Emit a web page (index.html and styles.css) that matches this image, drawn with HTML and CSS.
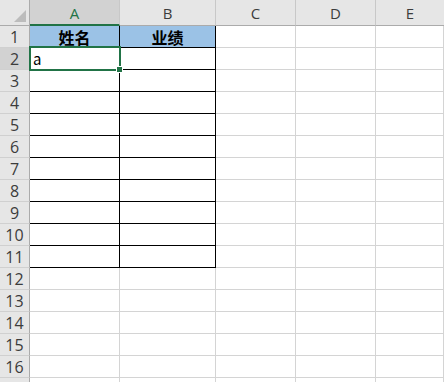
FILE: index.html
```html
<!DOCTYPE html>
<html lang="zh">
<head>
<meta charset="utf-8">
<link rel="stylesheet" href="styles.css">
</head>
<body>
<div class="sheet">
  <div class="grid">
    <div class="corner"><svg width="30" height="26" viewBox="0 0 30 26"><polygon points="14,22 26,22 26,10" fill="#bcbcbc"/></svg></div>
    <div class="ch active">A</div>
    <div class="ch">B</div>
    <div class="ch">C</div>
    <div class="ch">D</div>
    <div class="ch last">E</div>

    <div class="rh">1</div><div class="c t hd">姓名</div><div class="c t hd">业绩</div><div class="c"></div><div class="c"></div><div class="c"></div>
    <div class="rh active">2</div><div class="c t val">a</div><div class="c t"></div><div class="c"></div><div class="c"></div><div class="c"></div>
    <div class="rh">3</div><div class="c t"></div><div class="c t"></div><div class="c"></div><div class="c"></div><div class="c"></div>
    <div class="rh">4</div><div class="c t"></div><div class="c t"></div><div class="c"></div><div class="c"></div><div class="c"></div>
    <div class="rh">5</div><div class="c t"></div><div class="c t"></div><div class="c"></div><div class="c"></div><div class="c"></div>
    <div class="rh">6</div><div class="c t"></div><div class="c t"></div><div class="c"></div><div class="c"></div><div class="c"></div>
    <div class="rh">7</div><div class="c t"></div><div class="c t"></div><div class="c"></div><div class="c"></div><div class="c"></div>
    <div class="rh">8</div><div class="c t"></div><div class="c t"></div><div class="c"></div><div class="c"></div><div class="c"></div>
    <div class="rh">9</div><div class="c t"></div><div class="c t"></div><div class="c"></div><div class="c"></div><div class="c"></div>
    <div class="rh">10</div><div class="c t"></div><div class="c t"></div><div class="c"></div><div class="c"></div><div class="c"></div>
    <div class="rh">11</div><div class="c t"></div><div class="c t"></div><div class="c"></div><div class="c"></div><div class="c"></div>
    <div class="rh">12</div><div class="c"></div><div class="c"></div><div class="c"></div><div class="c"></div><div class="c"></div>
    <div class="rh">13</div><div class="c"></div><div class="c"></div><div class="c"></div><div class="c"></div><div class="c"></div>
    <div class="rh">14</div><div class="c"></div><div class="c"></div><div class="c"></div><div class="c"></div><div class="c"></div>
    <div class="rh">15</div><div class="c"></div><div class="c"></div><div class="c"></div><div class="c"></div><div class="c"></div>
    <div class="rh">16</div><div class="c"></div><div class="c"></div><div class="c"></div><div class="c"></div><div class="c"></div>
    <div class="rh"></div><div class="c"></div><div class="c"></div><div class="c"></div><div class="c"></div><div class="c"></div>
  </div>
  <div class="selection"></div>
  <div class="handle"></div>
</div>
</body>
</html>
```
FILE: styles.css
```css
html, body {
  margin: 0;
  padding: 0;
  background: #ffffff;
  overflow: hidden;
}
.sheet {
  position: relative;
  width: 444px;
  height: 382px;
  overflow: hidden;
}
.grid {
  display: grid;
  grid-template-columns: 30px 90px 96px 80px 80px 68px;
  grid-template-rows: 26px repeat(17, 22px);
}
.grid > div {
  box-sizing: border-box;
}
.corner {
  background: #e6e6e6;
  border-right: 1px solid #ababab;
  border-bottom: 1px solid #ababab;
}
.corner svg {
  display: block;
}
.ch {
  background: #e6e6e6;
  border-right: 1px solid #c8c8c8;
  border-bottom: 1px solid #ababab;
  display: flex;
  align-items: center;
  justify-content: center;
  font-family: "Open Sans", "Noto Sans", sans-serif;
  font-size: 15px;
  color: #3c3c3c;
  padding-top: 1px;
}
.ch.active {
  background: #d2d2d2;
  color: #217346;
  border-bottom: 2px solid #217346;
  padding-top: 2px;
}
.ch.last {
  border-right: none;
}
.rh {
  background: #e6e6e6;
  border-right: 1px solid #ababab;
  border-bottom: 1px solid #d0d0d0;
  display: flex;
  align-items: center;
  justify-content: center;
  font-family: "Open Sans", "Noto Sans", sans-serif;
  font-size: 16px;
  color: #3c3c3c;
}
.rh.active {
  background: #d2d2d2;
}
.c {
  border-right: 1px solid #d4d4d4;
  border-bottom: 1px solid #d4d4d4;
  font-family: "Noto Sans CJK SC", "Noto Sans", sans-serif;
  font-size: 15px;
  color: #000000;
  display: flex;
  align-items: center;
}
.c.t {
  border-right-color: #000000;
  border-bottom-color: #000000;
}
.c.hd {
  background: #9bc2e6;
  font-weight: bold;
  font-size: 16px;
  justify-content: center;
}
.c.val {
  padding-left: 3px;
}
.selection {
  position: absolute;
  left: 29px;
  top: 46px;
  width: 92px;
  height: 25px;
  box-sizing: border-box;
  border: 2px solid #217346;
}
.handle {
  position: absolute;
  left: 116px;
  top: 66px;
  width: 7px;
  height: 7px;
  box-sizing: border-box;
  background: #217346;
  border: 1px solid #ffffff;
}
```
